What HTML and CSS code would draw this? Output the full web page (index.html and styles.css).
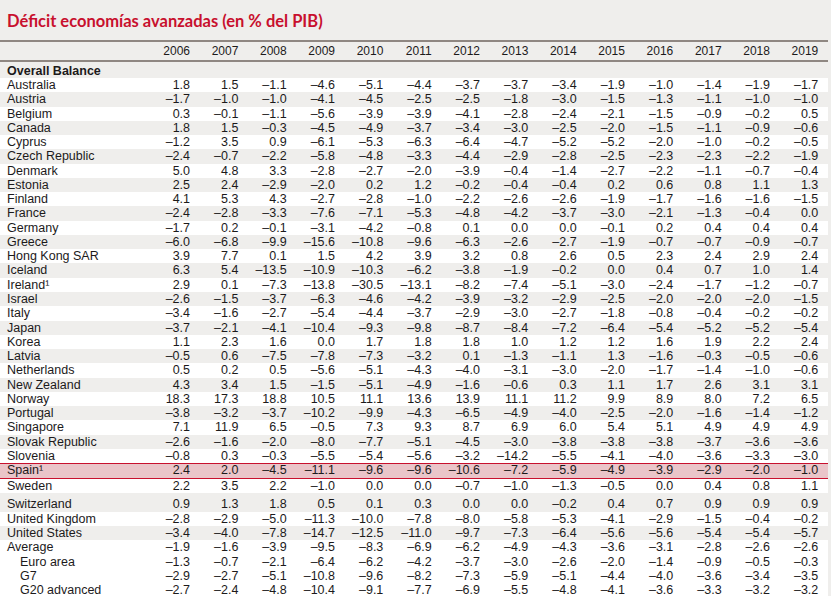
FILE: index.html
```html
<!DOCTYPE html>
<html lang="es">
<head>
<meta charset="utf-8">
<title>Déficit economías avanzadas</title>
<link rel="stylesheet" href="styles.css">
</head>
<body>
<h1 class="title">Déficit economías avanzadas (en % del PIB)</h1>
<table class="data">
<colgroup>
<col class="c-label">
<col class="c-num"><col class="c-num"><col class="c-num"><col class="c-num"><col class="c-num"><col class="c-num"><col class="c-num"><col class="c-num"><col class="c-num"><col class="c-num"><col class="c-num"><col class="c-num"><col class="c-num"><col class="c-num">
</colgroup>
<thead>
<tr class="head"><th></th><th>2006</th><th>2007</th><th>2008</th><th>2009</th><th>2010</th><th>2011</th><th>2012</th><th>2013</th><th>2014</th><th>2015</th><th>2016</th><th>2017</th><th>2018</th><th>2019</th></tr>
</thead>
<tbody>
<tr class="section"><td colspan="15">Overall Balance</td></tr>
<tr class="w"><td>Australia</td><td>1.8</td><td>1.5</td><td>–1.1</td><td>–4.6</td><td>–5.1</td><td>–4.4</td><td>–3.7</td><td>–3.7</td><td>–3.4</td><td>–1.9</td><td>–1.0</td><td>–1.4</td><td>–1.9</td><td>–1.7</td></tr>
<tr class="g"><td>Austria</td><td>–1.7</td><td>–1.0</td><td>–1.0</td><td>–4.1</td><td>–4.5</td><td>–2.5</td><td>–2.5</td><td>–1.8</td><td>–3.0</td><td>–1.5</td><td>–1.3</td><td>–1.1</td><td>–1.0</td><td>–1.0</td></tr>
<tr class="w"><td>Belgium</td><td>0.3</td><td>–0.1</td><td>–1.1</td><td>–5.6</td><td>–3.9</td><td>–3.9</td><td>–4.1</td><td>–2.8</td><td>–2.4</td><td>–2.1</td><td>–1.5</td><td>–0.9</td><td>–0.2</td><td>0.5</td></tr>
<tr class="g"><td>Canada</td><td>1.8</td><td>1.5</td><td>–0.3</td><td>–4.5</td><td>–4.9</td><td>–3.7</td><td>–3.4</td><td>–3.0</td><td>–2.5</td><td>–2.0</td><td>–1.5</td><td>–1.1</td><td>–0.9</td><td>–0.6</td></tr>
<tr class="w"><td>Cyprus</td><td>–1.2</td><td>3.5</td><td>0.9</td><td>–6.1</td><td>–5.3</td><td>–6.3</td><td>–6.4</td><td>–4.7</td><td>–5.2</td><td>–5.2</td><td>–2.0</td><td>–1.0</td><td>–0.2</td><td>–0.5</td></tr>
<tr class="g"><td>Czech Republic</td><td>–2.4</td><td>–0.7</td><td>–2.2</td><td>–5.8</td><td>–4.8</td><td>–3.3</td><td>–4.4</td><td>–2.9</td><td>–2.8</td><td>–2.5</td><td>–2.3</td><td>–2.3</td><td>–2.2</td><td>–1.9</td></tr>
<tr class="w"><td>Denmark</td><td>5.0</td><td>4.8</td><td>3.3</td><td>–2.8</td><td>–2.7</td><td>–2.0</td><td>–3.9</td><td>–0.4</td><td>–1.4</td><td>–2.7</td><td>–2.2</td><td>–1.1</td><td>–0.7</td><td>–0.4</td></tr>
<tr class="g"><td>Estonia</td><td>2.5</td><td>2.4</td><td>–2.9</td><td>–2.0</td><td>0.2</td><td>1.2</td><td>–0.2</td><td>–0.4</td><td>–0.4</td><td>0.2</td><td>0.6</td><td>0.8</td><td>1.1</td><td>1.3</td></tr>
<tr class="w"><td>Finland</td><td>4.1</td><td>5.3</td><td>4.3</td><td>–2.7</td><td>–2.8</td><td>–1.0</td><td>–2.2</td><td>–2.6</td><td>–2.6</td><td>–1.9</td><td>–1.7</td><td>–1.6</td><td>–1.6</td><td>–1.5</td></tr>
<tr class="g"><td>France</td><td>–2.4</td><td>–2.8</td><td>–3.3</td><td>–7.6</td><td>–7.1</td><td>–5.3</td><td>–4.8</td><td>–4.2</td><td>–3.7</td><td>–3.0</td><td>–2.1</td><td>–1.3</td><td>–0.4</td><td>0.0</td></tr>
<tr class="w"><td>Germany</td><td>–1.7</td><td>0.2</td><td>–0.1</td><td>–3.1</td><td>–4.2</td><td>–0.8</td><td>0.1</td><td>0.0</td><td>0.0</td><td>–0.1</td><td>0.2</td><td>0.4</td><td>0.4</td><td>0.4</td></tr>
<tr class="g"><td>Greece</td><td>–6.0</td><td>–6.8</td><td>–9.9</td><td>–15.6</td><td>–10.8</td><td>–9.6</td><td>–6.3</td><td>–2.6</td><td>–2.7</td><td>–1.9</td><td>–0.7</td><td>–0.7</td><td>–0.9</td><td>–0.7</td></tr>
<tr class="w"><td>Hong Kong SAR</td><td>3.9</td><td>7.7</td><td>0.1</td><td>1.5</td><td>4.2</td><td>3.9</td><td>3.2</td><td>0.8</td><td>2.6</td><td>0.5</td><td>2.3</td><td>2.4</td><td>2.9</td><td>2.4</td></tr>
<tr class="g"><td>Iceland</td><td>6.3</td><td>5.4</td><td>–13.5</td><td>–10.9</td><td>–10.3</td><td>–6.2</td><td>–3.8</td><td>–1.9</td><td>–0.2</td><td>0.0</td><td>0.4</td><td>0.7</td><td>1.0</td><td>1.4</td></tr>
<tr class="w"><td>Ireland¹</td><td>2.9</td><td>0.1</td><td>–7.3</td><td>–13.8</td><td>–30.5</td><td>–13.1</td><td>–8.2</td><td>–7.4</td><td>–5.1</td><td>–3.0</td><td>–2.4</td><td>–1.7</td><td>–1.2</td><td>–0.7</td></tr>
<tr class="g"><td>Israel</td><td>–2.6</td><td>–1.5</td><td>–3.7</td><td>–6.3</td><td>–4.6</td><td>–4.2</td><td>–3.9</td><td>–3.2</td><td>–2.9</td><td>–2.5</td><td>–2.0</td><td>–2.0</td><td>–2.0</td><td>–1.5</td></tr>
<tr class="w"><td>Italy</td><td>–3.4</td><td>–1.6</td><td>–2.7</td><td>–5.4</td><td>–4.4</td><td>–3.7</td><td>–2.9</td><td>–3.0</td><td>–2.7</td><td>–1.8</td><td>–0.8</td><td>–0.4</td><td>–0.2</td><td>–0.2</td></tr>
<tr class="g"><td>Japan</td><td>–3.7</td><td>–2.1</td><td>–4.1</td><td>–10.4</td><td>–9.3</td><td>–9.8</td><td>–8.7</td><td>–8.4</td><td>–7.2</td><td>–6.4</td><td>–5.4</td><td>–5.2</td><td>–5.2</td><td>–5.4</td></tr>
<tr class="w"><td>Korea</td><td>1.1</td><td>2.3</td><td>1.6</td><td>0.0</td><td>1.7</td><td>1.8</td><td>1.8</td><td>1.0</td><td>1.2</td><td>1.2</td><td>1.6</td><td>1.9</td><td>2.2</td><td>2.4</td></tr>
<tr class="g"><td>Latvia</td><td>–0.5</td><td>0.6</td><td>–7.5</td><td>–7.8</td><td>–7.3</td><td>–3.2</td><td>0.1</td><td>–1.3</td><td>–1.1</td><td>1.3</td><td>–1.6</td><td>–0.3</td><td>–0.5</td><td>–0.6</td></tr>
<tr class="w"><td>Netherlands</td><td>0.5</td><td>0.2</td><td>0.5</td><td>–5.6</td><td>–5.1</td><td>–4.3</td><td>–4.0</td><td>–3.1</td><td>–3.0</td><td>–2.0</td><td>–1.7</td><td>–1.4</td><td>–1.0</td><td>–0.6</td></tr>
<tr class="g"><td>New Zealand</td><td>4.3</td><td>3.4</td><td>1.5</td><td>–1.5</td><td>–5.1</td><td>–4.9</td><td>–1.6</td><td>–0.6</td><td>0.3</td><td>1.1</td><td>1.7</td><td>2.6</td><td>3.1</td><td>3.1</td></tr>
<tr class="w"><td>Norway</td><td>18.3</td><td>17.3</td><td>18.8</td><td>10.5</td><td>11.1</td><td>13.6</td><td>13.9</td><td>11.1</td><td>11.2</td><td>9.9</td><td>8.9</td><td>8.0</td><td>7.2</td><td>6.5</td></tr>
<tr class="g"><td>Portugal</td><td>–3.8</td><td>–3.2</td><td>–3.7</td><td>–10.2</td><td>–9.9</td><td>–4.3</td><td>–6.5</td><td>–4.9</td><td>–4.0</td><td>–2.5</td><td>–2.0</td><td>–1.6</td><td>–1.4</td><td>–1.2</td></tr>
<tr class="w"><td>Singapore</td><td>7.1</td><td>11.9</td><td>6.5</td><td>–0.5</td><td>7.3</td><td>9.3</td><td>8.7</td><td>6.9</td><td>6.0</td><td>5.4</td><td>5.1</td><td>4.9</td><td>4.9</td><td>4.9</td></tr>
<tr class="g"><td>Slovak Republic</td><td>–2.6</td><td>–1.6</td><td>–2.0</td><td>–8.0</td><td>–7.7</td><td>–5.1</td><td>–4.5</td><td>–3.0</td><td>–3.8</td><td>–3.8</td><td>–3.8</td><td>–3.7</td><td>–3.6</td><td>–3.6</td></tr>
<tr class="w"><td>Slovenia</td><td>–0.8</td><td>0.3</td><td>–0.3</td><td>–5.5</td><td>–5.4</td><td>–5.6</td><td>–3.2</td><td>–14.2</td><td>–5.5</td><td>–4.1</td><td>–4.0</td><td>–3.6</td><td>–3.3</td><td>–3.0</td></tr>
<tr class="hl"><td>Spain¹</td><td>2.4</td><td>2.0</td><td>–4.5</td><td>–11.1</td><td>–9.6</td><td>–9.6</td><td>–10.6</td><td>–7.2</td><td>–5.9</td><td>–4.9</td><td>–3.9</td><td>–2.9</td><td>–2.0</td><td>–1.0</td></tr>
<tr class="w"><td>Sweden</td><td>2.2</td><td>3.5</td><td>2.2</td><td>–1.0</td><td>0.0</td><td>0.0</td><td>–0.7</td><td>–1.0</td><td>–1.3</td><td>–0.5</td><td>0.0</td><td>0.4</td><td>0.8</td><td>1.1</td></tr>
<tr class="g tall"><td>Switzerland</td><td>0.9</td><td>1.3</td><td>1.8</td><td>0.5</td><td>0.1</td><td>0.3</td><td>0.0</td><td>0.0</td><td>–0.2</td><td>0.4</td><td>0.7</td><td>0.9</td><td>0.9</td><td>0.9</td></tr>
<tr class="w"><td>United Kingdom</td><td>–2.8</td><td>–2.9</td><td>–5.0</td><td>–11.3</td><td>–10.0</td><td>–7.8</td><td>–8.0</td><td>–5.8</td><td>–5.3</td><td>–4.1</td><td>–2.9</td><td>–1.5</td><td>–0.4</td><td>–0.2</td></tr>
<tr class="g"><td>United States</td><td>–3.4</td><td>–4.0</td><td>–7.8</td><td>–14.7</td><td>–12.5</td><td>–11.0</td><td>–9.7</td><td>–7.3</td><td>–6.4</td><td>–5.6</td><td>–5.6</td><td>–5.4</td><td>–5.4</td><td>–5.7</td></tr>
<tr class="w"><td>Average</td><td>–1.9</td><td>–1.6</td><td>–3.9</td><td>–9.5</td><td>–8.3</td><td>–6.9</td><td>–6.2</td><td>–4.9</td><td>–4.3</td><td>–3.6</td><td>–3.1</td><td>–2.8</td><td>–2.6</td><td>–2.6</td></tr>
<tr class="w sub"><td>Euro area</td><td>–1.3</td><td>–0.7</td><td>–2.1</td><td>–6.4</td><td>–6.2</td><td>–4.2</td><td>–3.7</td><td>–3.0</td><td>–2.6</td><td>–2.0</td><td>–1.4</td><td>–0.9</td><td>–0.5</td><td>–0.3</td></tr>
<tr class="w sub"><td>G7</td><td>–2.9</td><td>–2.7</td><td>–5.1</td><td>–10.8</td><td>–9.6</td><td>–8.2</td><td>–7.3</td><td>–5.9</td><td>–5.1</td><td>–4.4</td><td>–4.0</td><td>–3.6</td><td>–3.4</td><td>–3.5</td></tr>
<tr class="w sub"><td>G20 advanced</td><td>–2.7</td><td>–2.4</td><td>–4.8</td><td>–10.4</td><td>–9.1</td><td>–7.7</td><td>–6.9</td><td>–5.5</td><td>–4.8</td><td>–4.1</td><td>–3.6</td><td>–3.3</td><td>–3.2</td><td>–3.2</td></tr>
</tbody>
</table>
</body>
</html>
```

FILE: styles.css
```css
html, body {
  margin: 0;
  padding: 0;
  background: #efeeec;
}

body {
  width: 831px;
  height: 596px;
  overflow: hidden;
  color: #1c1a1b;
  font-family: "Liberation Sans Narrow", "Liberation Sans", Arial, sans-serif;
}

.title {
  margin: 0;
  padding: 11px 0 9px 7px;
  font-family: Lato, "Open Sans", sans-serif;
  font-weight: 700;
  font-size: 16.5px;
  line-height: 20px;
  color: #c8102e;
}

.data {
  width: 828px;
  table-layout: fixed;
  border-collapse: separate;
  border-spacing: 0;
  font-size: 12.5px;
}

.c-label { width: 151.7px; }
.c-num { width: 48.33px; }

.data th,
.data td {
  padding: 0 10px 0 0;
  text-align: right;
  white-space: nowrap;
  font-weight: 400;
}

.data td:first-child {
  text-align: left;
  padding: 0 0 0 7px;
}

.head th {
  font-family: "Liberation Sans", Arial, sans-serif;
  font-size: 12px;
  height: 18px;
  line-height: 18px;
  border-top: 2px solid #8f8782;
  border-bottom: 2px solid #8f8782;
}

.data tbody tr td {
  line-height: 14.27px;
  height: 14.27px;
}

.data tbody tr.section td {
  font-weight: 700;
  padding-top: 2px;
  line-height: 14px;
  height: 14px;
}

.w td { background: #ffffff; }
.g td { background: #efeeec; }

.data tbody tr.hl td {
  background: #eac5c9;
  line-height: 15.4px;
  height: 15.4px;
  box-shadow: inset 0 1px 0 #c8102e, inset 0 -1px 0 #c8102e;
}

.data tbody tr.tall td {
  padding-top: 4.5px;
  line-height: 14.4px;
  height: 14.4px;
}

.data tbody tr.sub td:first-child {
  padding-left: 20px;
}
```
